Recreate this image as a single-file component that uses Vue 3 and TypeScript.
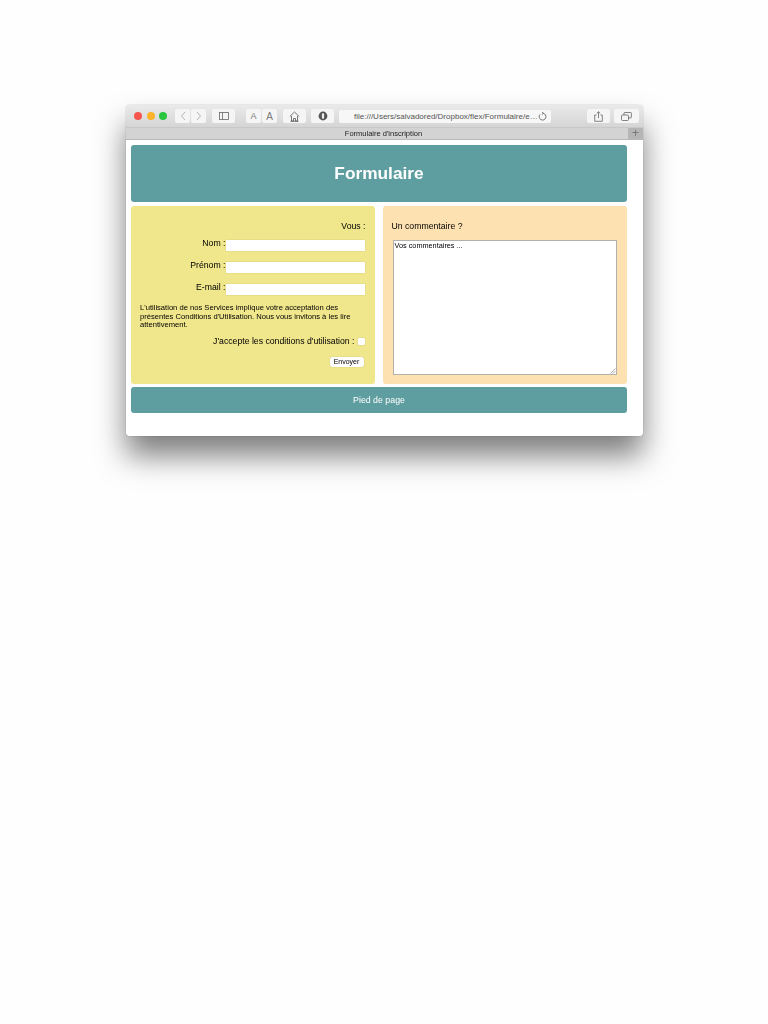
<script setup lang="ts">
const fields: string[] = ['Nom', 'Prénom', 'E-mail']
</script>

<template>
  <div class="page">
    <div class="frame">
      <div class="window">
        <div class="toolbar">
          <div class="lights">
            <span class="light red"></span>
            <span class="light amber"></span>
            <span class="light green"></span>
          </div>
          <div class="btn nav">
            <svg width="8" height="12" viewBox="0 0 8 12" fill="none" stroke="#b4b4b4" stroke-width="1"><path d="M6 2 2.500 6 6 10" /></svg>
          </div>
          <div class="btn nav next">
            <svg width="8" height="12" viewBox="0 0 8 12" fill="none" stroke="#b4b4b4" stroke-width="1"><path d="M2 2l3.500 4L2 10" /></svg>
          </div>
          <div class="btn side">
            <svg width="10" height="8" viewBox="0 0 10 8" fill="none" stroke="#666" stroke-width="0.8"><rect x="0.5" y="0.5" width="9" height="7" /><path d="M3.5 0.5v7" /></svg>
          </div>
          <div class="btn font first"><span class="aa small">A</span></div>
          <div class="btn font"><span class="aa big">A</span></div>
          <div class="btn home">
            <svg width="11" height="11" viewBox="0 0 11 11" fill="none" stroke="#555" stroke-width="0.8"><path d="M0.8 5.500 5.500 1l4.700 4.500" /><path d="M2.500 5v5h2V7.500h2V10h2V5" /><path d="M1.500 10.300h8" /></svg>
          </div>
          <div class="btn shield">
            <svg width="10" height="10" viewBox="0 0 10 10"><circle cx="5" cy="5" r="4.400" fill="#555" /><rect x="3.900" y="2.200" width="2.200" height="5.600" rx="1" fill="#eee" /></svg>
          </div>
          <div class="address">
            <span class="url">file:///Users/salvadored/Dropbox/flex/Formulaire/e&#8230;</span>
            <svg class="reload" width="9" height="9" viewBox="0 0 9 9" fill="none" stroke="#555" stroke-width="0.8"><path d="M5.200 1.300A3.400 3.400 0 1 1 2 2.400" /><path d="M4 0.200l1.400 1.100L4 2.500" /></svg>
          </div>
          <div class="btn share">
            <svg width="9" height="11" viewBox="0 0 9 11" fill="none" stroke="#666" stroke-width="0.8"><path d="M2.500 4H.7v6.300h7.600V4H6.500" /><path d="M4.500 7V.8M2.800 2.400 4.500.8l1.700 1.600" /></svg>
          </div>
          <div class="btn tabs">
            <svg width="11" height="9" viewBox="0 0 11 9" fill="none" stroke="#666" stroke-width="0.8"><rect x="0.5" y="3" width="7" height="5.500" rx="1" /><path d="M3 3V1.200a.7.7 0 0 1 .7-.7h6a.7.7 0 0 1 .7.7v4a.7.7 0 0 1-.7.7H7.500" /></svg>
          </div>
        </div>
        <div class="tabbar">
          <span class="tabtitle">Formulaire d'inscription</span>
          <span class="plus">+</span>
        </div>
        <div class="content">
          <header class="hero">Formulaire</header>
          <div class="columns">
            <form class="card left">
              <p class="vous">Vous :</p>
              <div v-for="f in fields" :key="f" class="field">
                <label>{{ f }} :</label>
                <span class="input"></span>
              </div>
              <p class="terms">L'utilisation de nos Services implique votre acceptation des présentes Conditions d'Utilisation. Nous vous invitons à les lire attentivement.</p>
              <div class="accept">
                <span>J'accepte les conditions d'utilisation :</span>
                <span class="check"></span>
              </div>
              <div class="send"><span class="submit">Envoyer</span></div>
            </form>
            <div class="card right">
              <p class="comment">Un commentaire ?</p>
              <div class="area">
                <span>Vos commentaires ...</span>
                <svg class="grip" width="6" height="6" viewBox="0 0 6 6" stroke="#777" stroke-width="0.6"><path d="M0.500 5.500 5.500 0.500M3 5.500l2.500-2.500" /></svg>
              </div>
            </div>
          </div>
          <footer class="foot">Pied de page</footer>
        </div>
      </div>
    </div>
  </div>
</template>

<style scoped>
.page {
  width: 768px;
  height: 1024px;
  box-sizing: border-box;
  padding: 105px 0 0 126px;
  background: #fefefe;
  overflow: hidden;
  font-family: "Liberation Sans", Arial, sans-serif;
  color: #000;
}
.frame {
  width: 517px;
  height: 331px;
  border-radius: 4px;
  box-shadow: 0 0 1px rgba(0, 0, 0, 0.5), 0 20px 30px rgba(0, 0, 0, 0.5);
}
.window {
  width: 517px;
  height: 331px;
  display: flex;
  flex-direction: column;
  background: #fff;
  border-radius: 4px;
  overflow: hidden;
  filter: blur(0.6px);
}
.toolbar {
  height: 22px;
  flex: none;
  display: flex;
  align-items: center;
  box-sizing: border-box;
  padding-left: 8px;
  background: linear-gradient(#ebeaeb, #d6d5d6);
}
.lights { display: flex; gap: 4.500px; width: 41px; }
.light { width: 8px; height: 8px; border-radius: 50%; }
.red { background: #f7564f; }
.amber { background: #fab32a; }
.green { background: #28c63f; }
.btn {
  height: 14px;
  background: #f5f5f5;
  border-radius: 2px;
  display: flex;
  align-items: center;
  justify-content: center;
  flex: none;
}
.nav { width: 15px; }
.next { margin-left: 1px; }
.side { width: 23px; margin-left: 6px; }
.font { width: 15px; margin-left: 1px; }
.first { margin-left: 11px; }
.aa { color: #7a7a7a; line-height: 13px; text-align: center; }
.small { font-size: 9px; }
.big { font-size: 10px; }
.home { width: 23px; margin-left: 6px; }
.shield { width: 23px; margin-left: 5px; }
.address {
  width: 212px;
  height: 13px;
  margin-left: 5px;
  flex: none;
  box-sizing: border-box;
  padding: 0 4px 0 15px;
  background: #f7f7f7;
  border-radius: 2px;
  display: flex;
  align-items: center;
  justify-content: space-between;
}
.url { font-size: 8px; color: #555; white-space: nowrap; }
.reload { flex: none; }
.share { width: 23px; margin-left: 36px; }
.tabs { width: 25px; margin-left: 4px; }
.tabbar {
  height: 13px;
  flex: none;
  position: relative;
  display: flex;
  align-items: center;
  justify-content: center;
  padding-right: 2px;
  background: #d4d3d4;
  border-top: 1px solid #c8c8c8;
  border-bottom: 1px solid #b8b8b8;
  box-sizing: border-box;
}
.tabtitle { font-size: 7.500px; color: #222; }
.plus {
  position: absolute;
  right: 0;
  top: 0;
  width: 15px;
  height: 11px;
  line-height: 11px;
  text-align: center;
  font-size: 12px;
  color: #777;
  background: #b5b5b5;
}
.content {
  flex: 1;
  display: flex;
  flex-direction: column;
  gap: 4px;
  padding: 5px 16px 0 5px;
}
.hero {
  height: 57px;
  flex: none;
  display: flex;
  align-items: center;
  justify-content: center;
  padding-bottom: 1px;
  box-sizing: border-box;
  background: #5f9ea0;
  border-radius: 3px;
  color: #fff;
  font-size: 17.300px;
  font-weight: 700;
}
.columns {
  display: flex;
  gap: 8px;
  height: 178px;
  flex: none;
}
.card {
  flex: 1;
  border-radius: 3px;
  box-sizing: border-box;
  margin: 0;
}
.left {
  background: #f0e68c;
  padding: 15px 9px 0;
  font-size: 8.700px;
}
.right {
  background: #fee1b1;
  padding: 15px 10px 0 9px;
  font-size: 8.700px;
}
p { margin: 0; }
.vous { text-align: right; line-height: 10px; margin-bottom: 8px; }
.field {
  display: flex;
  justify-content: flex-end;
  align-items: flex-start;
  height: 11px;
  margin-bottom: 11px;
  line-height: 10px;
}
.field label { margin-top: -1px; }
.input { width: 139px; height: 11px; margin-top: 0.5px; margin-right: 1px; background: #fff; box-shadow: 0 0 1px rgba(0,0,0,.2); }
.terms { font-size: 7.600px; line-height: 8.600px; margin-top: -1px; }
.accept {
  display: flex;
  justify-content: flex-end;
  align-items: center;
  gap: 3px;
  margin-top: 6.500px;
  line-height: 10px;
}
.check { width: 7px; height: 7px; background: #fff; border-radius: 1px; margin-right: 1px; box-shadow: 0 0 1px rgba(0,0,0,.3); }
.send { display: flex; justify-content: flex-end; margin-top: 11px; }
.submit {
  width: 34px;
  height: 9.500px;
  line-height: 9.500px;
  text-align: center;
  font-size: 7px;
  background: #fff;
  border-radius: 2px;
  box-shadow: 0 0 1px rgba(0,0,0,.3);
  margin-right: 2px;
}
.comment { line-height: 10px; margin-bottom: 9px; }
.area {
  position: relative;
  height: 135px;
  margin-left: 1px;
  box-sizing: border-box;
  border: 1px solid #b3b0ab;
  background: #fff;
  font-size: 7.300px;
  line-height: 9px;
  padding: 0 1px;
}
.grip { position: absolute; right: 0; bottom: 0; }
.foot {
  height: 26px;
  flex: none;
  display: flex;
  align-items: center;
  justify-content: center;
  background: #5f9ea0;
  border-radius: 3px;
  color: #fff;
  font-size: 8.800px;
  margin-top: -1px;
}
</style>

<style>
html, body { margin: 0; background: #fefefe; }
</style>
